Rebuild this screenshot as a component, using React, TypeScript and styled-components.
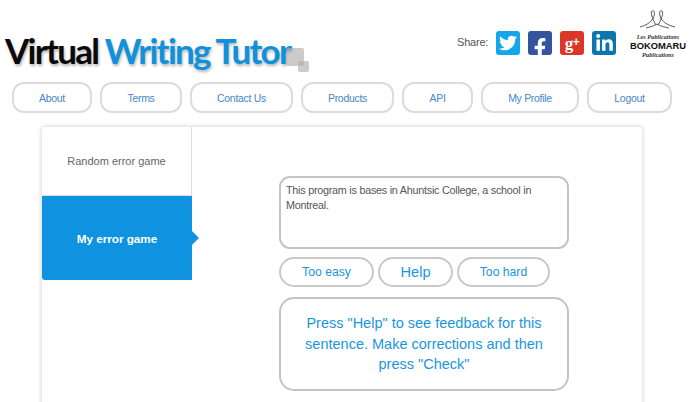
import React from 'react';
import styled, { createGlobalStyle } from 'styled-components';
import { FaTwitter, FaFacebookF, FaLinkedinIn } from 'react-icons/fa';

const GlobalStyle = createGlobalStyle`
  html, body {
    margin: 0;
    padding: 0;
    background: #fff;
    overflow: hidden;
    font-family: "Liberation Sans", Arial, sans-serif;
  }
`;

const Page = styled.div`
  width: 700px;
  height: 402px;
  overflow: hidden;
`;

const Header = styled.header`
  height: 82px;
  display: flex;
  justify-content: space-between;
`;

const Logo = styled.h1`
  position: relative;
  margin: 32px 0 0 5px;
  font-family: Lato, "Open Sans", sans-serif;
  font-size: 35px;
  font-weight: 700;
  line-height: 36px;
  letter-spacing: -1.75px;
  white-space: nowrap;
  color: #0a0a0a;
  text-shadow: 1px 2px 3px rgba(0, 0, 0, 0.3);
`;

const LogoAccent = styled.span`
  color: #1091dc;
`;

const LogoSquare = styled.i<{ $size: number; $left: number; $top: number }>`
  position: absolute;
  left: ${(p) => p.$left}px;
  top: ${(p) => p.$top}px;
  width: ${(p) => p.$size}px;
  height: ${(p) => p.$size}px;
  border-radius: 2px;
  background: rgba(175, 175, 175, 0.65);
`;

const HeaderRight = styled.div`
  display: flex;
  align-items: flex-start;
`;

const Share = styled.div`
  display: flex;
  align-items: center;
  margin-top: 31px;
`;

const ShareLabel = styled.span`
  width: 39px;
  margin-bottom: 3px;
  font-size: 11px;
  letter-spacing: -0.2px;
  color: #555;
`;

const SocialIcon = styled.a<{ $bg: string }>`
  position: relative;
  width: 24px;
  height: 24px;
  margin-right: 8px;
  border-radius: 3px;
  display: flex;
  align-items: center;
  justify-content: center;
  overflow: hidden;
  color: #fff;
  background: ${(p) => p.$bg};
`;

const FacebookGlyph = styled(FaFacebookF)`
  position: absolute;
  right: 2px;
  bottom: -3px;
`;

const GooglePlusGlyph = styled.span`
  font-family: "Liberation Serif", serif;
  font-size: 17px;
  font-weight: 700;
  line-height: 20px;
  letter-spacing: -0.5px;
`;

const GooglePlusMark = styled.span`
  font-family: "Liberation Sans", sans-serif;
  font-size: 12px;
  vertical-align: 3px;
`;

const Publisher = styled.div`
  width: 54px;
  margin: 9px 15px 0 7px;
  display: flex;
  flex-direction: column;
  align-items: center;
  color: #111;
`;

const PublisherFigure = styled.svg`
  margin-bottom: 4px;
`;

const PublisherScript = styled.span`
  font-family: "Liberation Serif", serif;
  font-style: italic;
  font-weight: 700;
  font-size: 6.2px;
  line-height: 8px;
  white-space: nowrap;
  color: #333;
`;

const PublisherName = styled.span`
  font-size: 9.4px;
  font-weight: 700;
  line-height: 10px;
  white-space: nowrap;
`;

const Nav = styled.nav`
  display: flex;
  gap: 8px;
  padding-left: 12px;
`;

const NavButton = styled.a<{ $width: number }>`
  width: ${(p) => p.$width}px;
  height: 31px;
  box-sizing: border-box;
  display: flex;
  align-items: center;
  justify-content: center;
  border: 2px solid #dcdcdc;
  border-radius: 12px;
  font-size: 10.5px;
  letter-spacing: -0.3px;
  color: #4a86c8;
`;

const Card = styled.main`
  width: 600px;
  height: 300px;
  margin: 14px 0 0 42px;
  display: flex;
  border-radius: 3px 3px 0 0;
  background: #fff;
  box-shadow: 0 0 5px rgba(0, 0, 0, 0.22);
`;

const Tabs = styled.div`
  width: 150px;
  flex: none;
  display: flex;
  flex-direction: column;
`;

const Tab = styled.div<{ $active?: boolean }>`
  position: relative;
  height: ${(p) => (p.$active ? 84 : 69)}px;
  display: flex;
  align-items: center;
  justify-content: center;
  box-sizing: border-box;
  font-size: ${(p) => (p.$active ? 11.7 : 11)}px;
  font-weight: ${(p) => (p.$active ? 700 : 400)};
  color: ${(p) => (p.$active ? '#fff' : '#666')};
  background: ${(p) => (p.$active ? '#0f93e0' : '#fff')};
  border-right: ${(p) => (p.$active ? 'none' : '1px solid #ddd')};
  border-bottom: ${(p) => (p.$active ? 'none' : '1px solid #ddd')};
  border-radius: ${(p) => (p.$active ? '0 0 0 3px' : '0')};
  ${(p) =>
    p.$active &&
    `
    &::after {
      content: "";
      position: absolute;
      left: 100%;
      top: 50%;
      margin-top: -7px;
      border-left: 7px solid #0f93e0;
      border-top: 7px solid transparent;
      border-bottom: 7px solid transparent;
    }
  `}
`;

const Game = styled.section`
  width: 290px;
  margin: 49px 0 0 87px;
  display: flex;
  flex-direction: column;
`;

const Sentence = styled.div`
  height: 73px;
  box-sizing: border-box;
  padding: 5px 5px;
  border: 2px solid #c4c4c4;
  border-radius: 11px;
  font-size: 10.8px;
  letter-spacing: -0.25px;
  line-height: 14.5px;
  color: #555;
`;

const Actions = styled.div`
  display: flex;
  gap: 4px;
  margin-top: 8px;
`;

const ActionButton = styled.button<{ $width: number; $large?: boolean }>`
  width: ${(p) => p.$width}px;
  height: 30px;
  padding: 0;
  border: 2px solid #c8c8c8;
  border-radius: 15px;
  background: #fff;
  font-family: inherit;
  font-size: ${(p) => (p.$large ? 14.6 : 12.2)}px;
  color: #1a96de;
`;

const Feedback = styled.div`
  height: 94px;
  margin-top: 10px;
  box-sizing: border-box;
  padding: 14px 20px 0;
  border: 2px solid #c4c4c4;
  border-radius: 15px;
  font-size: 14.5px;
  line-height: 20.7px;
  text-align: center;
  color: #1a96de;
`;

const navItems = [
  { label: 'About', width: 80 },
  { label: 'Terms', width: 82 },
  { label: 'Contact Us', width: 103 },
  { label: 'Products', width: 93 },
  { label: 'API', width: 71 },
  { label: 'My Profile', width: 98 },
  { label: 'Logout', width: 85 },
];

const App: React.FC = function() {
  return (
    <Page>
      <GlobalStyle />
      <Header>
        <Logo>
          Virtual <LogoAccent>Writing Tutor</LogoAccent>
          <LogoSquare $size={18} $left={281} $top={16} />
          <LogoSquare $size={11} $left={293} $top={29} />
        </Logo>
        <HeaderRight>
          <Share>
            <ShareLabel>Share:</ShareLabel>
            <SocialIcon $bg="#12a6ea"><FaTwitter size={18} /></SocialIcon>
            <SocialIcon $bg="#34549b"><FacebookGlyph size={20} /></SocialIcon>
            <SocialIcon $bg="#da3727">
              <GooglePlusGlyph>g<GooglePlusMark>+</GooglePlusMark></GooglePlusGlyph>
            </SocialIcon>
            <SocialIcon $bg="#0b76ad"><FaLinkedinIn size={19} /></SocialIcon>
          </Share>
          <Publisher>
            <PublisherFigure width="36" height="20" viewBox="0 0 36 20" fill="none" stroke="#333" strokeWidth="0.8">
              <path d="M0 18 C7 16 12 13 14 7 C15 3 14 1 12 2 C10 4 13 11 16 16" />
              <path d="M35 18 C27 16 22 13 20 7 C19 3 20 1 22 2 C24 4 21 11 18 16" />
              <path d="M6 19 C10 18 14 17 17 15 C20 17 24 18 29 19" />
            </PublisherFigure>
            <PublisherScript>Les Publications</PublisherScript>
            <PublisherName>BOKOMARU</PublisherName>
            <PublisherScript>Publications</PublisherScript>
          </Publisher>
        </HeaderRight>
      </Header>
      <Nav>
        {navItems.map((item) => (
          <NavButton key={item.label} $width={item.width}>{item.label}</NavButton>
        ))}
      </Nav>
      <Card>
        <Tabs>
          <Tab>Random error game</Tab>
          <Tab $active>My error game</Tab>
        </Tabs>
        <Game>
          <Sentence>This program is bases in Ahuntsic College, a school in Montreal.</Sentence>
          <Actions>
            <ActionButton $width={95}>Too easy</ActionButton>
            <ActionButton $width={75} $large>Help</ActionButton>
            <ActionButton $width={93}>Too hard</ActionButton>
          </Actions>
          <Feedback>Press "Help" to see feedback for this sentence. Make corrections and then press "Check"</Feedback>
        </Game>
      </Card>
    </Page>
  );
};

export default App;
